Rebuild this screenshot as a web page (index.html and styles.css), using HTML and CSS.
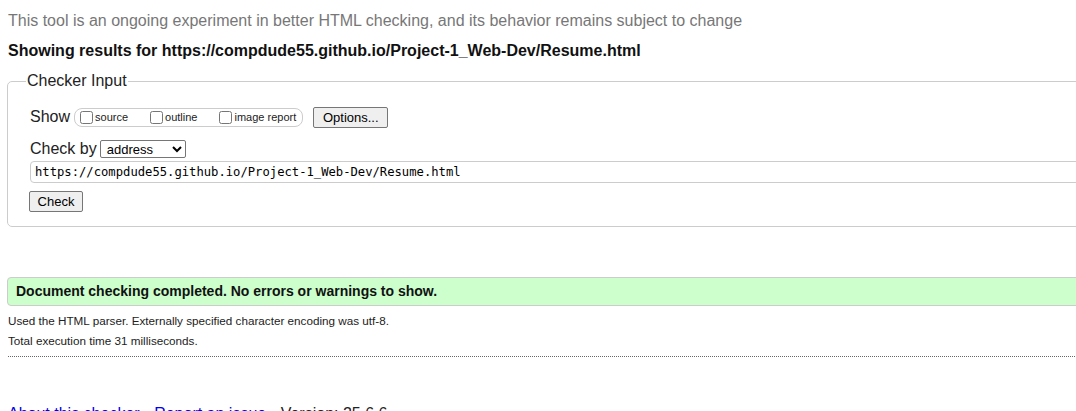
FILE: index.html
```html
<!DOCTYPE html>
<html>
<head>
<meta charset="utf-8">
<link rel="stylesheet" href="styles.css">
</head>
<body>
<div class="page">
  <p class="note">This tool is an ongoing experiment in better HTML checking, and its behavior remains subject to change</p>
  <p class="results">Showing results for https://compdude55.github.io/Project-1_Web-Dev/Resume.html</p>
  <fieldset class="checker">
    <legend>Checker Input</legend>
    <div class="row show-row">
      <span class="label">Show</span>
      <span class="group">
        <label class="opt"><input type="checkbox">source</label>
        <label class="opt"><input type="checkbox">outline</label>
        <label class="opt"><input type="checkbox">image report</label>
      </span>
      <button class="btn options">Options...</button>
    </div>
    <div class="row by-row">
      <span class="label">Check by</span>
      <select class="sel"><option>address</option></select>
    </div>
    <input class="url" type="text" value="https://compdude55.github.io/Project-1_Web-Dev/Resume.html">
    <div class="row"><button class="btn check">Check</button></div>
  </fieldset>
  <div class="success">Document checking completed. No errors or warnings to show.</div>
  <p class="details first">Used the HTML parser. Externally specified character encoding was utf-8.</p>
  <p class="details">Total execution time 31 milliseconds.</p>
  <hr class="dots">
  <p class="footer"><a href="#">About this checker</a> • <a href="#">Report an issue</a> • Version: 25.6.6</p>
</div>
</body>
</html>
```
FILE: styles.css
```css
html { overflow: hidden; background: #fff; }
body { margin: 0; font-family: "Liberation Sans", Arial, sans-serif; color: #000; }
.page { width: 1200px; padding-left: 7px; }
.note { margin: 0; padding-top: 11px; height: 19px; line-height: 19px; font-size: 16px; color: #777; padding-left: 1px; }
.results { margin: 0; padding-top: 11px; height: 19px; line-height: 19px; font-size: 16px; font-weight: bold; color: #111; padding-left: 1px; }
.checker {
  margin: 12px 0 0 0;
  border: 1px solid #ccc;
  border-radius: 5px;
  padding: 16px 0 14px 22px;
  min-width: 0;
}
.checker legend { font-size: 16px; padding: 0 1px; margin-left: -4px; color: #222; }
.row { display: flex; align-items: center; }
.label { font-size: 16px; color: #222; }
.show-row { height: 20px; margin-top: 1px; }
.group {
  display: inline-flex; align-items: center; gap: 21px;
  border: 1px solid #ccc; border-radius: 8px;
  height: 17px; padding: 0 6px 0 4px; margin-left: 4px;
}
.opt { display: inline-flex; align-items: center; font-size: 11px; color: #222; }
.opt input { margin: 0 2px 0 1px; width: 13px; height: 13px; }
.btn {
  font-family: "Liberation Sans", Arial, sans-serif; font-size: 13px; color: #000;
  background: #efefef; border: 1px solid #767676; border-radius: 2px;
  padding: 0 6px; height: 21px;
}
.options { margin-left: 10px; padding: 0 5px; width: 75px; }
.by-row { margin-top: 12px; height: 20px; }
.sel {
  margin-left: 3px; width: 86px; height: 18px; font-size: 13px;
  font-family: "Liberation Sans", Arial, sans-serif;
  border: 1px solid #767676; border-radius: 2px; background: #fff; color: #000; padding: 0 2px;
}
.url {
  display: block; box-sizing: border-box; width: 1150px; height: 22px; margin: 2px 0 0 0;
  border: 1px solid #ccc; border-radius: 4px; padding: 0 4px;
  font-family: "DejaVu Sans Mono", monospace; font-size: 12.2px; color: #000;
}
.check { margin-top: 8px; height: 21px; width: 54px; font-size: 13px; margin-left: -1px; }
.success {
  margin-top: 50px; height: 27px; line-height: 27px;
  background: #ccffcc; border: 1px solid #ccc; border-radius: 4px 0 0 4px;
  padding-left: 8px; font-size: 14px; font-weight: bold; color: #111;
}
.details { margin: 0; font-size: 11.7px; color: #222; padding-left: 1px; height: 20px; line-height: 20px; }
.details.first { margin-top: 5px; }
.dots { margin: 5px 0 0 1px; border: 0; border-top: 1px dotted #666; height: 0; }
.footer { margin: 48px 0 0 1px; font-size: 16px; color: #222; }
.footer a { color: #0000ee; text-decoration: none; }
```
